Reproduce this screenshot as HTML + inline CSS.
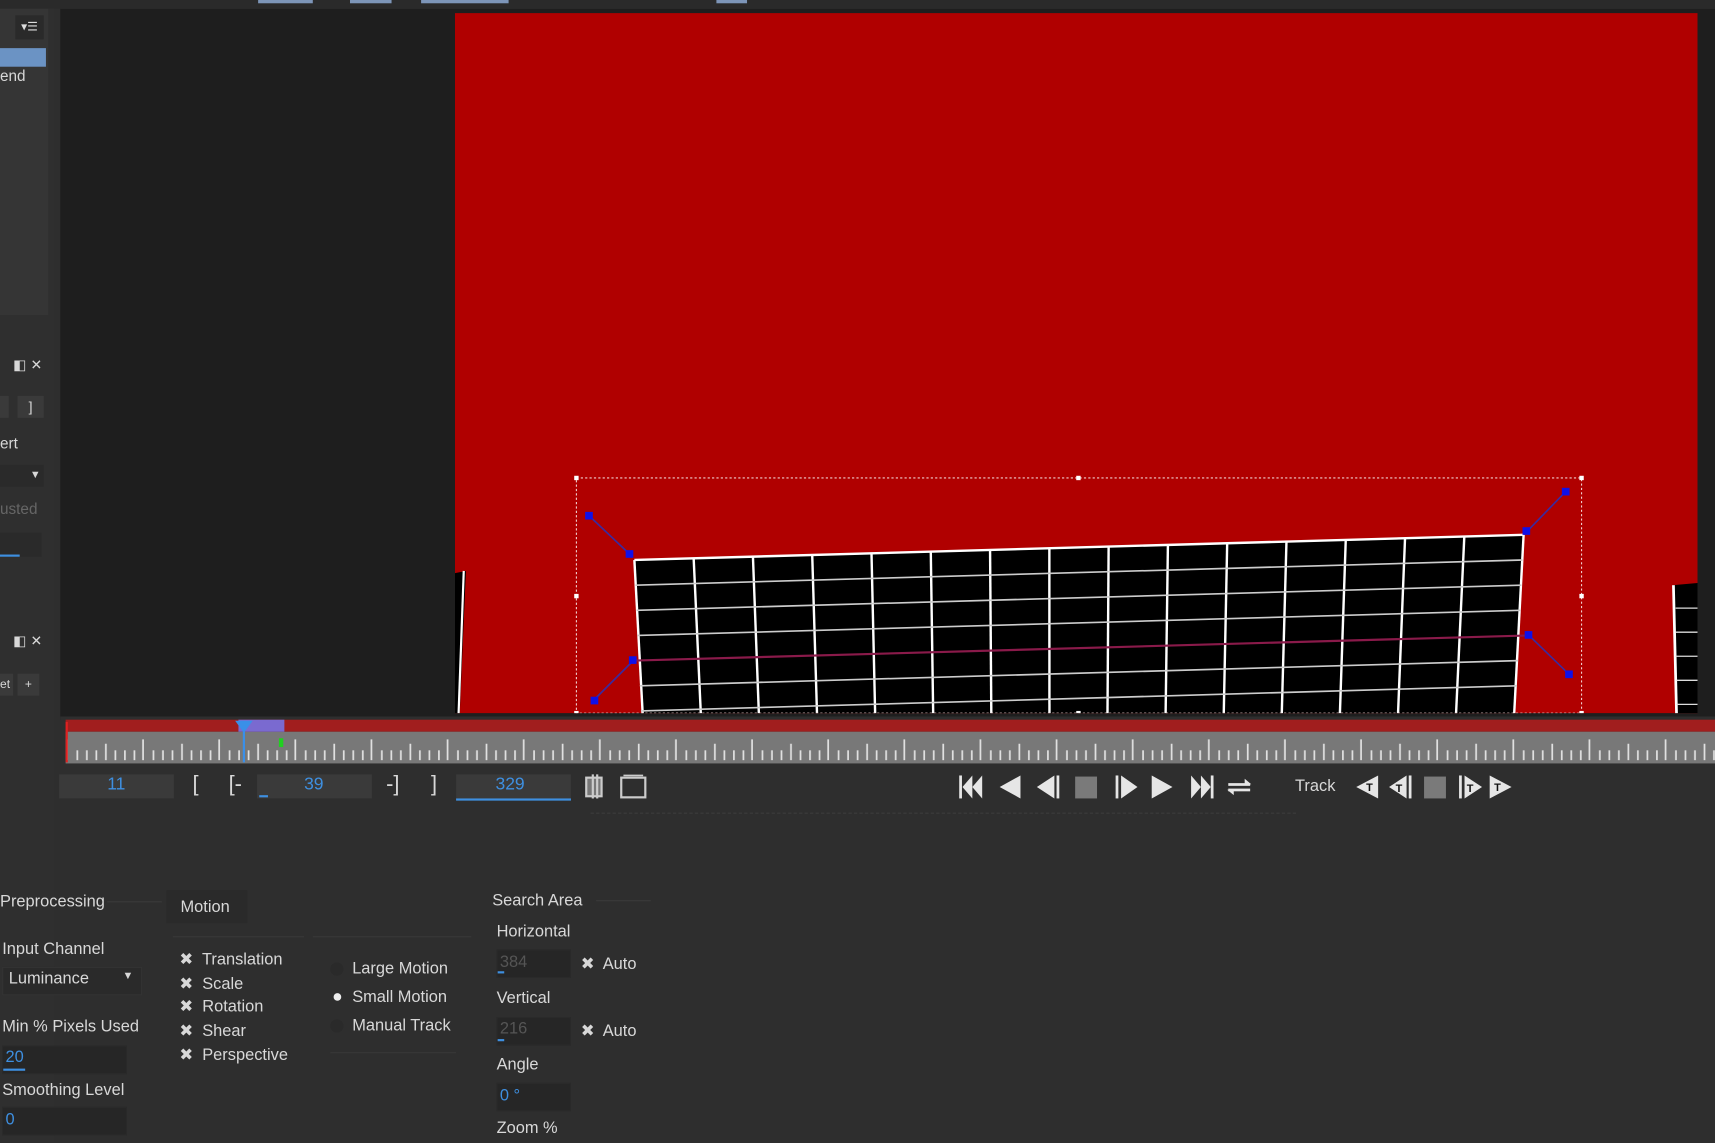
<!DOCTYPE html>
<html><head><meta charset="utf-8"><style>
html,body{margin:0;padding:0;background:#2e2e2e;overflow:hidden;width:1715px;height:1143px}
#w{position:absolute;left:0;top:0;width:1568px;height:1045px;transform:scale(1.09375);transform-origin:0 0;background:#2e2e2e;font-family:"Liberation Sans",sans-serif;color:#d8d8d8;font-size:15px}
.a{position:absolute;white-space:nowrap}
.box{position:absolute;background:#262626;border:1px solid #2a2a2a}
.blue{color:#3e8fe0}
</style></head><body><div id="w">
<div class="a" style="left:0;top:0;width:1568px;height:8px;background:#2a2a2a"></div>
<div class="a" style="left:236px;top:0;width:50px;height:3px;background:#7d95b8"></div>
<div class="a" style="left:320px;top:0;width:38px;height:3px;background:#7d95b8"></div>
<div class="a" style="left:385px;top:0;width:80px;height:3px;background:#7d95b8"></div>
<div class="a" style="left:655px;top:0;width:28px;height:3px;background:#7d95b8"></div>
<div class="a" style="left:0;top:8px;width:50px;height:1037px;background:#2f2f2f"></div>
<div class="a" style="left:0;top:8px;width:44px;height:280px;background:#353535"></div>
<div class="a" style="left:14px;top:14px;width:26px;height:22px;background:#2a2a2a;color:#ddd;font-size:11px;text-align:center;line-height:22px">▾☰</div>
<div class="a" style="left:0;top:44px;width:42px;height:17px;background:#6b93c4"></div>
<div class="a" style="left:0;top:61px;font-size:14px">end</div>
<div class="a" style="left:12px;top:326px;font-size:13px">◧ ✕</div>
<div class="a" style="left:0;top:362px;width:8px;height:20px;background:#3a3a3a"></div>
<div class="a" style="left:16px;top:362px;width:24px;height:20px;background:#3a3a3a;text-align:center;font-size:13px;line-height:20px">]</div>
<div class="a" style="left:0;top:397px;font-size:14px">ert</div>
<div class="a" style="left:0;top:425px;width:40px;height:20px;background:#2a2a2a;font-size:10px;text-align:right;line-height:20px">▼&nbsp;</div>
<div class="a" style="left:0;top:457px;font-size:14px;color:#666">usted</div>
<div class="a" style="left:0;top:487px;width:38px;height:22px;background:#2a2a2a"></div>
<div class="a" style="left:0;top:507px;width:18px;height:2px;background:#3e8fe0"></div>
<div class="a" style="left:12px;top:578px;font-size:13px">◧ ✕</div>
<div class="a" style="left:0;top:616px;width:12px;height:20px;background:#3a3a3a;font-size:11px;line-height:20px">et</div>
<div class="a" style="left:16px;top:616px;width:20px;height:20px;background:#3a3a3a;font-size:11px;line-height:20px;text-align:center">+</div>
<svg class="a" style="left:55px;top:8px" width="1513" height="650" viewBox="55 8 1513 650">
<rect x="55" y="8" width="1513" height="650" fill="#1e1e1e"/>
<rect x="416" y="12" width="1136" height="640" fill="#b00000"/>
<clipPath id="c"><rect x="416" y="12" width="1136" height="640"/></clipPath>
<g clip-path="url(#c)">
<polygon points="416,524 426,522 420,660 416,660" fill="#000"/>
<line x1="424" y1="522" x2="419" y2="660" stroke="#fff" stroke-width="2"/>
<polygon points="1530,535 1552,533 1552,660 1533,660" fill="#000"/>
<line x1="1530" y1="535" x2="1533" y2="660" stroke="#fff" stroke-width="2.5"/>
<g stroke="#ddd" stroke-width="1.2"><line x1="1532" y1="556" x2="1552" y2="556"/><line x1="1532" y1="578" x2="1552" y2="578"/><line x1="1532" y1="600" x2="1552" y2="600"/><line x1="1533" y1="622" x2="1552" y2="622"/><line x1="1533" y1="644" x2="1552" y2="644"/></g>
<polygon points="580,512 1393,489 1384,665 588,665" fill="#000"/>
<g stroke="#fff" stroke-width="2.2">
<line x1="580" y1="512" x2="588" y2="660"/>
<line x1="634.2" y1="510.5" x2="641.1" y2="660"/>
<line x1="688.4" y1="508.9" x2="694.1" y2="660"/>
<line x1="742.6" y1="507.4" x2="747.2" y2="660"/>
<line x1="796.8" y1="505.9" x2="800.3" y2="660"/>
<line x1="851" y1="504.3" x2="853.3" y2="660"/>
<line x1="905.2" y1="502.8" x2="906.4" y2="660"/>
<line x1="959.4" y1="501.3" x2="959.5" y2="660"/>
<line x1="1013.6" y1="499.7" x2="1012.5" y2="660"/>
<line x1="1067.8" y1="498.2" x2="1065.6" y2="660"/>
<line x1="1122" y1="496.7" x2="1118.7" y2="660"/>
<line x1="1176.2" y1="495.1" x2="1171.7" y2="660"/>
<line x1="1230.4" y1="493.6" x2="1224.8" y2="660"/>
<line x1="1284.6" y1="492.1" x2="1277.9" y2="660"/>
<line x1="1338.8" y1="490.5" x2="1330.9" y2="660"/>
<line x1="1393" y1="489" x2="1384" y2="660"/>
<line x1="580" y1="512" x2="1393" y2="489"/>
</g>
<g stroke="#ccc" stroke-width="1.5">
<line x1="581" y1="535" x2="1392" y2="512"/>
<line x1="582" y1="558" x2="1391" y2="535"/>
<line x1="583" y1="581" x2="1390" y2="558"/>
<line x1="585" y1="627" x2="1388" y2="604"/>
<line x1="586" y1="650" x2="1387" y2="627"/>
</g>
<line x1="579" y1="604" x2="1398" y2="581" stroke="#8a1a4a" stroke-width="2"/>
<rect x="527" y="437" width="919" height="215" fill="none" stroke="#f0d0d0" stroke-width="1" stroke-dasharray="2,2"/>
<g fill="#fff"><rect x="525" y="435" width="4" height="4"/><rect x="984" y="435" width="4" height="4"/><rect x="1444" y="435" width="4" height="4"/><rect x="525" y="543" width="4" height="4"/><rect x="1444" y="543" width="4" height="4"/><rect x="525" y="650" width="4" height="4"/><rect x="984" y="650" width="4" height="4"/><rect x="1444" y="650" width="4" height="4"/></g>
<g stroke="#3a2aa0" stroke-width="1.5"><line x1="538" y1="471" x2="576" y2="507"/><line x1="543" y1="640" x2="579" y2="604"/><line x1="1432" y1="449" x2="1396" y2="486"/><line x1="1435" y1="617" x2="1398" y2="581"/></g>
<g fill="#1010e8"><rect x="535" y="468" width="7" height="7"/><rect x="572" y="503" width="7" height="7"/><rect x="540" y="637" width="7" height="7"/><rect x="575" y="600" width="7" height="7"/><rect x="1428" y="446" width="7" height="7"/><rect x="1392" y="482" width="7" height="7"/><rect x="1431" y="613" width="7" height="7"/><rect x="1394" y="577" width="7" height="7"/></g>
</g>
</svg>
<svg class="a" style="left:55px;top:655px" width="1513" height="45" viewBox="55 655 1513 45">
<defs><pattern id="tk" x="62" y="655" width="69.6" height="45" patternUnits="userSpaceOnUse">
<g stroke="#e0e0e0" stroke-width="1.6">
<line x1="8.7" y1="31" x2="8.7" y2="40"/><line x1="17.4" y1="31" x2="17.4" y2="40"/><line x1="26.1" y1="31" x2="26.1" y2="40"/><line x1="34.8" y1="25" x2="34.8" y2="40"/><line x1="43.5" y1="31" x2="43.5" y2="40"/><line x1="52.2" y1="31" x2="52.2" y2="40"/><line x1="60.9" y1="31" x2="60.9" y2="40"/><line x1="68.8" y1="21" x2="68.8" y2="40"/></g></pattern></defs>
<rect x="55" y="655" width="1513" height="45" fill="#2e2e2e"/>
<rect x="60" y="658" width="1508" height="11" fill="#a11e1e"/>
<rect x="60" y="669" width="1508" height="29" fill="#787878"/>
<rect x="60" y="669" width="1508" height="29" fill="url(#tk)"/>
<rect x="218" y="658" width="42" height="11" fill="#7a6ad0"/>
<polygon points="215,659 231,659 223,670" fill="#3a8fe8"/>
<line x1="223" y1="665" x2="223" y2="697" stroke="#3a8fe8" stroke-width="2"/>
<line x1="61" y1="660" x2="61" y2="697" stroke="#e02020" stroke-width="2"/>
<rect x="255" y="675" width="4" height="8" fill="#20d020"/>
</svg>
<div class="box" style="left:54px;top:708px;width:105px;height:22px;background:#3a3a3a;border:none"></div>
<div class="a blue" style="left:98px;top:709px;font-size:16px">11</div>
<div class="a" style="left:176px;top:706px;font-size:20px">[</div>
<div class="a" style="left:209px;top:706px;font-size:20px">[-</div>
<div class="box" style="left:235px;top:708px;width:105px;height:22px;background:#3a3a3a;border:none"></div>
<div class="a" style="left:237px;top:727px;width:8px;height:2px;background:#3e8fe0"></div>
<div class="a blue" style="left:278px;top:709px;font-size:16px">39</div>
<div class="a" style="left:353px;top:706px;font-size:20px">-]</div>
<div class="a" style="left:394px;top:706px;font-size:20px">]</div>
<div class="box" style="left:417px;top:708px;width:105px;height:22px;background:#3a3a3a;border:none;border-bottom:2px solid #3e8fe0"></div>
<div class="a blue" style="left:453px;top:709px;font-size:16px">329</div>
<svg class="a" style="left:530px;top:706px" width="65" height="26"><g stroke="#ccc" fill="none" stroke-width="2"><rect x="6" y="5" width="14" height="17" fill="#777"/><line x1="12" y1="2" x2="12" y2="24"/><line x1="16" y1="2" x2="16" y2="24"/><rect x="38" y="5" width="22" height="18"/><line x1="40" y1="3" x2="58" y2="3" stroke-width="1.5"/></g></svg>
<svg class="a" style="left:870px;top:706px" width="290" height="28">
<g fill="#e6e6e6">
<rect x="7" y="3" width="2.5" height="21"/><polygon points="19,3 10,13.5 19,24"/><polygon points="28,3 19,13.5 28,24"/>
<polygon points="63,3 44,13.5 63,24"/>
<polygon points="94,3 78,13.5 94,24"/><rect x="96" y="3" width="2.5" height="21"/>
<rect x="150" y="3" width="2.5" height="21"/><polygon points="155,3 170,13.5 155,24"/>
<polygon points="183,3 202,13.5 183,24"/>
<polygon points="219,3 228,13.5 219,24"/><polygon points="228,3 237,13.5 228,24"/><rect x="237" y="3" width="2.5" height="21"/>
<rect x="253" y="10" width="20" height="2.5"/><polygon points="268,6 274,11 268,11"/><rect x="253" y="15" width="20" height="2.5"/><polygon points="258,21 252,16 258,16"/>
</g>
<rect x="113" y="4" width="20" height="20" fill="#7a7a7a"/>
</svg>
<div class="a" style="left:1184px;top:710px;font-size:15px">Track</div>
<svg class="a" style="left:1236px;top:706px" width="150" height="28">
<g fill="#e6e6e6"><polygon points="24,3 4,13.5 24,24"/><polygon points="50,3 34,13.5 50,24"/><rect x="52" y="3" width="2.5" height="21"/>
<rect x="98" y="3" width="2.5" height="21"/><polygon points="103,3 119,13.5 103,24"/><polygon points="126,3 146,13.5 126,24"/></g>
<g fill="#111" font-family="Liberation Sans" font-weight="bold" font-size="10"><text x="13" y="17">T</text><text x="40" y="18">T</text><text x="105" y="18">T</text><text x="130" y="17">T</text></g>
<rect x="66" y="4" width="20" height="20" fill="#7a7a7a"/>
</svg>
<div class="a" style="left:540px;top:743px;width:645px;border-top:1px dashed #3c3c3c"></div>
<div class="a" style="left:0;top:816px">Preprocessing</div>
<div class="a" style="left:98px;top:824px;width:50px;border-top:1px solid #3a3a3a"></div>
<div class="a" style="left:152px;top:814px;width:74px;height:30px;background:#2a2a2a"></div>
<div class="a" style="left:165px;top:821px">Motion</div>
<div class="a" style="left:2px;top:859px">Input Channel</div>
<div class="a" style="left:2px;top:884px;width:126px;height:24px;background:#2a2a2a;border:1px solid #333"></div>
<div class="a" style="left:8px;top:886px">Luminance</div>
<div class="a" style="left:112px;top:887px;font-size:10px">▼</div>
<div class="a" style="left:2px;top:930px">Min % Pixels Used</div>
<div class="box" style="left:2px;top:956px;width:112px;height:24px"></div>
<div class="a blue" style="left:5px;top:958px">20</div>
<div class="a" style="left:3px;top:977px;width:20px;height:2px;background:#3e8fe0"></div>
<div class="a" style="left:2px;top:988px">Smoothing Level</div>
<div class="box" style="left:2px;top:1012px;width:112px;height:24px"></div>
<div class="a blue" style="left:5px;top:1015px">0</div>
<div class="a" style="left:158px;top:856px;width:120px;border-top:1px solid #383838"></div>
<div class="a" style="left:286px;top:856px;width:145px;border-top:1px solid #383838"></div>
<div class="a" style="left:164px;top:867px;line-height:21.7px">✖&nbsp; Translation<br>✖&nbsp; Scale<br>✖&nbsp; Rotation<br>✖&nbsp; Shear<br>✖&nbsp; Perspective</div>
<div class="a" style="left:302px;top:880px;width:12px;height:12px;border-radius:50%;background:#2a2a2a"></div>
<div class="a" style="left:322px;top:877px">Large Motion</div>
<div class="a" style="left:305px;top:908px;width:7px;height:7px;border-radius:50%;background:#eee"></div>
<div class="a" style="left:322px;top:903px">Small Motion</div>
<div class="a" style="left:302px;top:932px;width:12px;height:12px;border-radius:50%;background:#2a2a2a"></div>
<div class="a" style="left:322px;top:929px">Manual Track</div>
<div class="a" style="left:302px;top:962px;width:115px;border-top:1px solid #383838"></div>
<div class="a" style="left:450px;top:815px">Search Area</div>
<div class="a" style="left:545px;top:823px;width:50px;border-top:1px solid #3a3a3a"></div>
<div class="a" style="left:454px;top:843px">Horizontal</div>
<div class="box" style="left:454px;top:868px;width:66px;height:24px"></div>
<div class="a" style="left:457px;top:871px;color:#555">384</div>
<div class="a" style="left:455px;top:888px;width:6px;height:2px;background:#3e8fe0"></div>
<div class="a" style="left:531px;top:872px">✖&nbsp; Auto</div>
<div class="a" style="left:454px;top:904px">Vertical</div>
<div class="box" style="left:454px;top:930px;width:66px;height:24px"></div>
<div class="a" style="left:457px;top:932px;color:#555">216</div>
<div class="a" style="left:455px;top:950px;width:6px;height:2px;background:#3e8fe0"></div>
<div class="a" style="left:531px;top:933px">✖&nbsp; Auto</div>
<div class="a" style="left:454px;top:965px">Angle</div>
<div class="box" style="left:454px;top:990px;width:66px;height:24px"></div>
<div class="a blue" style="left:457px;top:993px">0 °</div>
<div class="a" style="left:454px;top:1023px">Zoom %</div>
</div></body></html>
